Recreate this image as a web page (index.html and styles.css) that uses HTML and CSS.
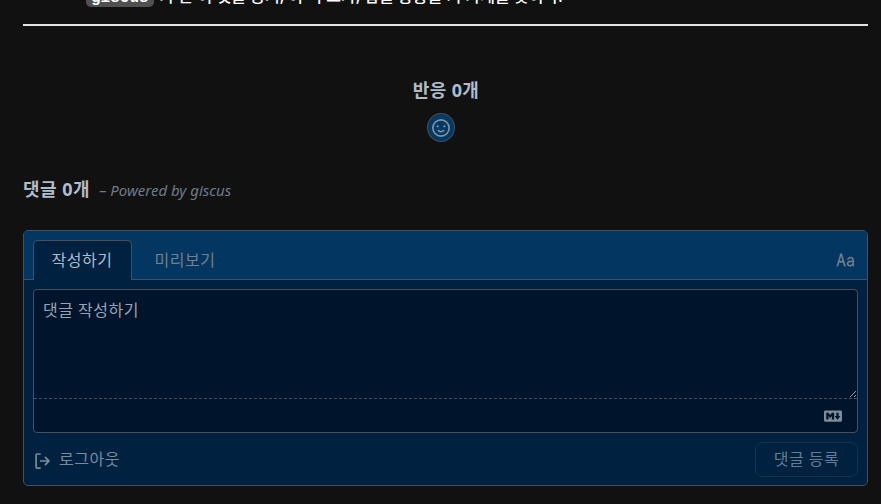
FILE: index.html
```
<!DOCTYPE html>
<html lang="ko">
<head>
<meta charset="utf-8">
<title>giscus</title>
<link rel="stylesheet" href="styles.css">
</head>
<body>
<main class="page">
  <div class="article"><p class="article-line"><code>giscus</code><span class="article-text">가 는 이 댓글 공기, 이 리 그가, 답글 통통을 기 가게를 옷이다.</span></p></div>
  <section class="reactions">
    <h4 class="reactions-title">반응 0개</h4>
    <button class="reaction-button" aria-label="반응">
      <svg width="18" height="18" viewBox="0 0 16 16" fill="currentColor"><path d="M8 0a8 8 0 1 1 0 16A8 8 0 0 1 8 0ZM1.5 8a6.5 6.5 0 1 0 13 0 6.5 6.5 0 0 0-13 0Zm3.82 1.636a.75.75 0 0 1 1.038.175l.007.009c.103.118.22.222.35.31.264.178.683.37 1.285.37.602 0 1.02-.192 1.285-.371.13-.088.247-.192.35-.31l.007-.008a.75.75 0 0 1 1.222.87l-.022.03c-.182.248-.422.49-.717.689-.49.328-1.184.6-2.125.6-.94 0-1.636-.272-2.125-.6a3.8 3.8 0 0 1-.717-.69l-.013-.018a.75.75 0 0 1 .175-1.056ZM6 6.5a1 1 0 1 1-2 0 1 1 0 0 1 2 0Zm5 1a1 1 0 1 0 0-2 1 1 0 0 0 0 2Z"/></svg>
    </button>
  </section>
  <header class="comments-header"><h4>댓글 0개</h4><em>– Powered by giscus</em></header>
  <form class="comment-box">
    <div class="tabs">
      <span class="tab tab-active">작성하기</span><span class="tab">미리보기</span>
      <svg class="font-icon" width="20" height="22" viewBox="0 0 16 16" preserveAspectRatio="none" fill="currentColor" stroke="currentColor" stroke-width=".25"><path d="M3.62 3.2h.96l3.08 9.3H6.54l-.86-2.72H2.5l-.87 2.72H.55ZM4.08 4.72 2.8 8.8h2.57ZM9 7.55c.25-1.1 1.15-1.75 2.6-1.75 1.7 0 2.65.8 2.65 2.3v4.4h-1v-.85c-.45.65-1.2.98-2.1.98-1.45 0-2.4-.8-2.4-2 0-1.25.95-1.95 2.65-2.02l1.8-.08V8.1c0-.9-.55-1.35-1.6-1.35-.85 0-1.4.3-1.55.85Zm4.2 1.8-1.65.08c-1.15.06-1.75.43-1.75 1.15 0 .68.58 1.12 1.5 1.12 1.15 0 1.9-.68 1.9-1.65Z"/></svg>
    </div>
    <div class="editor">
      <textarea placeholder="댓글 작성하기"></textarea>
      <div class="editor-footer"><svg width="18" height="18" viewBox="0 0 16 16" fill="currentColor"><path fill-rule="evenodd" d="M14.85 3H1.15C.52 3 0 3.52 0 4.15v7.69C0 12.48.52 13 1.15 13h13.69c.64 0 1.15-.52 1.15-1.15v-7.7C16 3.52 15.48 3 14.85 3ZM9 11H7V8L5.5 9.92 4 8v3H2V5h2l1.5 2L7 5h2v6Zm2.99.5L9.5 8H11V5h2v3h1.5l-2.51 3.5Z"/></svg></div>
    </div>
    <div class="actions">
      <a class="logout"><svg width="18" height="18" viewBox="0 0 16 16" fill="currentColor"><path d="M2 2.75C2 1.784 2.784 1 3.75 1h2.5a.75.75 0 0 1 0 1.5h-2.5a.25.25 0 0 0-.25.25v10.5c0 .138.112.25.25.25h2.5a.75.75 0 0 1 0 1.5h-2.5A1.75 1.75 0 0 1 2 13.25Zm10.44 4.5-1.97-1.97a.749.749 0 0 1 1.06-1.06l3.25 3.25a.75.75 0 0 1 0 1.06l-3.25 3.25a.749.749 0 1 1-1.06-1.06l1.97-1.97H6.75a.75.75 0 0 1 0-1.5Z"/></svg><span>로그아웃</span></a>
      <button type="button" class="submit">댓글 등록</button>
    </div>
  </form>
</main>
</body>
</html>
```
FILE: styles.css
```
* { box-sizing: border-box; }
body {
  margin: 0;
  height: 504px;
  overflow: hidden;
  background: #111;
  color: #b0bccb;
  font: 16px/24px "Noto Sans", "Noto Sans CJK KR", sans-serif;
}
.page { padding: 0 13px 0 23px; }
.article {
  height: 26px;
  display: flex;
  align-items: flex-end;
  overflow: hidden;
  border-bottom: 2px solid #e6e3e8;
  padding-bottom: 16px;
}
.article-line { display: flex; align-items: center; gap: 6px; margin: 0 0 0 63px; white-space: nowrap; color: #fff; }
.article-line code {
  height: 21px;
  padding: 0 5px;
  border-radius: 5px;
  background: #505050;
  font: bold 16px/24px "Liberation Mono", monospace;
}
.article-text { font-weight: 500; letter-spacing: .04px; }
.reactions { display: flex; flex-direction: column; align-items: center; padding-top: 51px; }
.reactions-title { margin: 0 0 10px 1px; font-size: 18px; line-height: 26px; letter-spacing: .4px; }
.reaction-button {
  width: 28px;
  height: 29px;
  margin-right: 9px;
  padding: 0;
  display: grid;
  place-items: center;
  border: 1px solid #434e5b;
  border-radius: 50%;
  background: #033963;
  color: #8291a2;
}
.comments-header { display: flex; align-items: center; gap: 9px; height: 26px; margin-top: 35px; }
.comments-header h4 { margin: -2px 0 0; font-size: 18px; line-height: 26px; letter-spacing: .5px; }
.comments-header em { font-size: 15px; color: #6f7b89; }
.comment-box {
  height: 256px;
  margin-top: 27px;
  border: 1px solid #45505c;
  border-radius: 5px;
  background: #002240;
  overflow: hidden;
}
.tabs {
  height: 49px;
  padding: 9px 12px 0 9px;
  display: flex;
  background: #033660;
  border-bottom: 1px solid #45505c;
}
.tab { height: 40px; width: 99px; padding-left: 17.5px; line-height: 38px; color: #6f8092; border: 1px solid transparent; letter-spacing: .5px; }
.tab + .tab { margin-left: 4px; }
.tab-active { color: #b0bccb; background: #002240; border-color: #45505c; border-bottom: 0; border-radius: 5px 5px 0 0; }
.font-icon { margin: 9px -1px 0 auto; color: #748393; }
.editor { height: 144px; margin: 9px 9px 0; border: 1px solid #45505c; border-radius: 4px; background: #00152b; }
.editor textarea {
  display: block;
  width: 100%;
  height: 109px;
  padding: 8px 9px;
  border: 0;
  border-bottom: 1px dashed #45505c;
  outline: 0;
  resize: vertical;
  background: transparent;
  font: inherit;
  letter-spacing: .5px;
}
.editor textarea::placeholder { color: #98a4b2; opacity: 1; }
.editor-footer { height: 33px; display: flex; align-items: center; justify-content: flex-end; padding-right: 15px; color: #7e8c9b; }
.actions { display: flex; justify-content: space-between; align-items: center; margin: 9px 9px 0; }
.logout { display: flex; align-items: center; gap: 8px; color: #7b8b9c; letter-spacing: .5px; }
.logout svg { margin-top: 2px; }
.logout span { margin-top: -2px; }
.submit {
  width: 103px;
  height: 35px;
  padding: 0 0 2px;
  border: 1px solid #14334f;
  border-radius: 7px;
  background: transparent;
  color: #647c94;
  font: inherit;
  letter-spacing: .5px;
}
```
